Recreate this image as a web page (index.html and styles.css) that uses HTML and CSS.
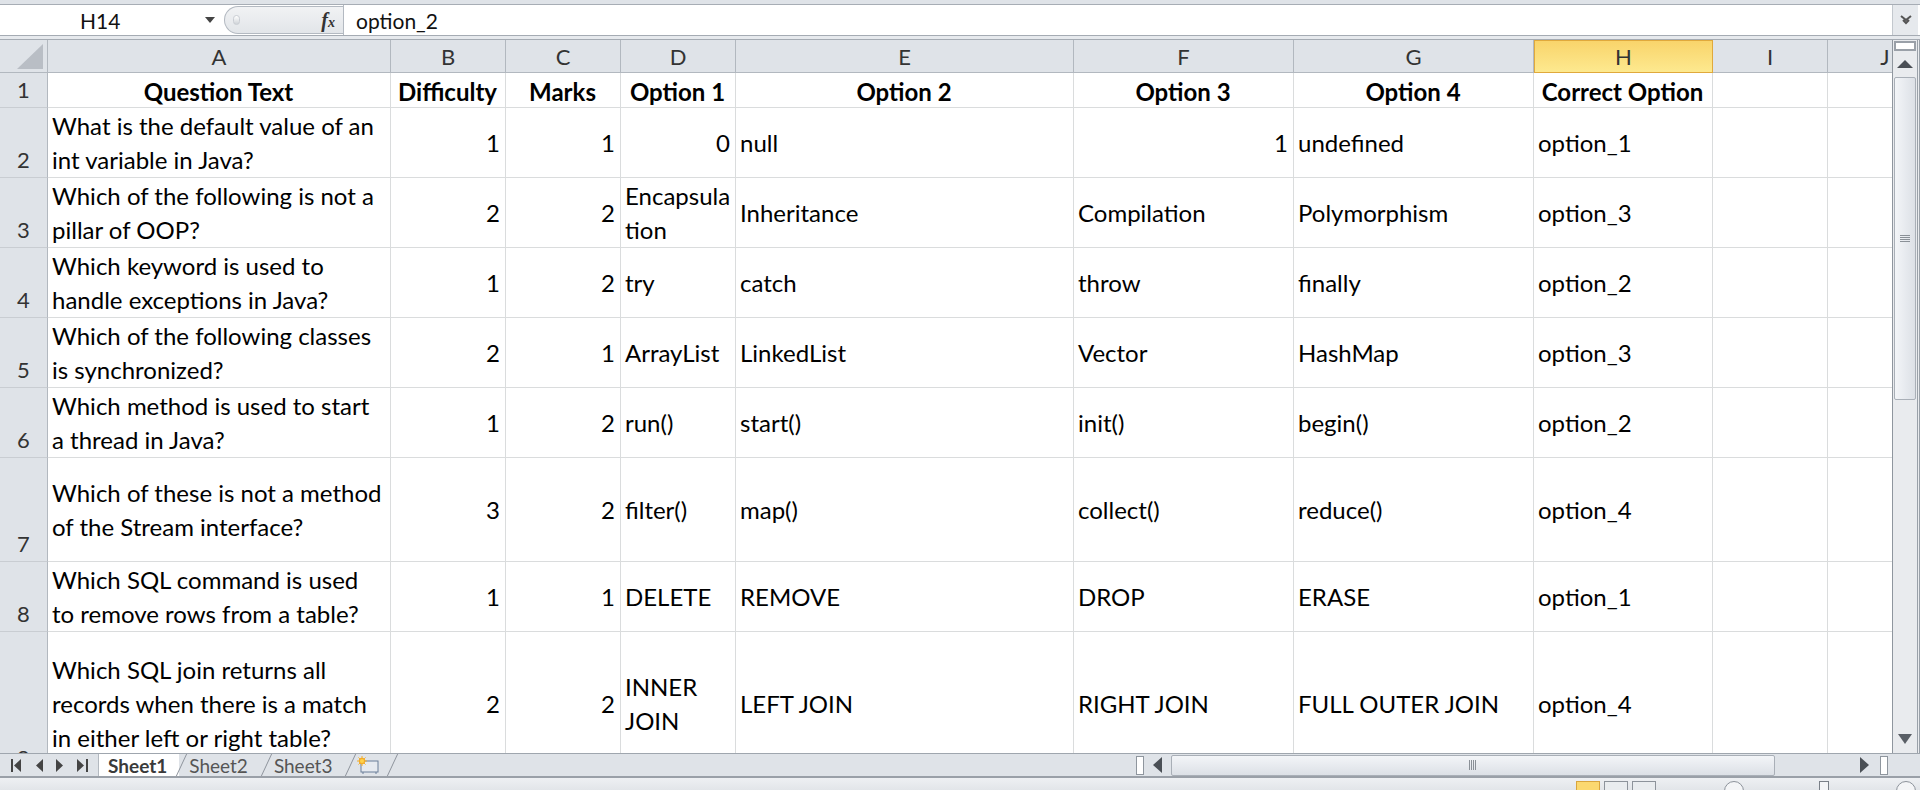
FILE: index.html
```html
<!DOCTYPE html>
<html>
<head>
<meta charset="utf-8">
<title>Questions - Excel</title>
<link rel="stylesheet" href="styles.css">
</head>
<body>
<div class="app">
  <div class="ribbon-edge"></div>
  <div class="formula-bar">
    <div class="namebox">
      <span class="name">H14</span>
      <svg class="nb-arrow" width="10" height="6" viewBox="0 0 10 6"><path d="M0 0H10L5 6Z" fill="#444"/></svg>
    </div>
    <div class="fb-pill">
      <span class="fb-dot"></span>
      <span class="fx">f<span class="fx-x">x</span></span>
    </div>
    <div class="fb-input">option_2</div>
    <div class="fb-expand">
      <svg width="12" height="10" viewBox="0 0 12 10"><path d="M1 1L6 5L11 1M3 5L6 8L9 5" fill="none" stroke="#555" stroke-width="2"/></svg>
    </div>
  </div>
  <div class="fb-sep"></div>

  <div class="sheet-area">
    <div class="grid-wrap">
      <div class="grid">
        <div class="corner"><svg width="26" height="25" viewBox="0 0 26 25"><path d="M26 0V25H0Z" fill="#b9bec5"/></svg></div>
        <div class="ch">A</div><div class="ch">B</div><div class="ch">C</div><div class="ch">D</div><div class="ch">E</div><div class="ch">F</div><div class="ch">G</div><div class="ch sel">H</div><div class="ch">I</div><div class="ch">J</div>

        <div class="rh">1</div>
        <div class="c b"><span>Question Text</span></div>
        <div class="c b"><span>Difficulty</span></div>
        <div class="c b"><span>Marks</span></div>
        <div class="c b"><span>Option 1</span></div>
        <div class="c b"><span>Option 2</span></div>
        <div class="c b"><span>Option 3</span></div>
        <div class="c b"><span>Option 4</span></div>
        <div class="c b"><span>Correct Option</span></div>
        <div class="c"></div><div class="c"></div>

        <div class="rh">2</div>
        <div class="c"><span>What is the default value of an<br>int variable in Java?</span></div>
        <div class="c r"><span>1</span></div>
        <div class="c r"><span>1</span></div>
        <div class="c r"><span>0</span></div>
        <div class="c"><span>null</span></div>
        <div class="c r"><span>1</span></div>
        <div class="c"><span>undefined</span></div>
        <div class="c"><span>option_1</span></div>
        <div class="c"></div><div class="c"></div>

        <div class="rh">3</div>
        <div class="c"><span>Which of the following is not a<br>pillar of OOP?</span></div>
        <div class="c r"><span>2</span></div>
        <div class="c r"><span>2</span></div>
        <div class="c"><span>Encapsula<br>tion</span></div>
        <div class="c"><span>Inheritance</span></div>
        <div class="c"><span>Compilation</span></div>
        <div class="c"><span>Polymorphism</span></div>
        <div class="c"><span>option_3</span></div>
        <div class="c"></div><div class="c"></div>

        <div class="rh">4</div>
        <div class="c"><span>Which keyword is used to<br>handle exceptions in Java?</span></div>
        <div class="c r"><span>1</span></div>
        <div class="c r"><span>2</span></div>
        <div class="c"><span>try</span></div>
        <div class="c"><span>catch</span></div>
        <div class="c"><span>throw</span></div>
        <div class="c"><span>finally</span></div>
        <div class="c"><span>option_2</span></div>
        <div class="c"></div><div class="c"></div>

        <div class="rh">5</div>
        <div class="c"><span>Which of the following classes<br>is synchronized?</span></div>
        <div class="c r"><span>2</span></div>
        <div class="c r"><span>1</span></div>
        <div class="c"><span>ArrayList</span></div>
        <div class="c"><span>LinkedList</span></div>
        <div class="c"><span>Vector</span></div>
        <div class="c"><span>HashMap</span></div>
        <div class="c"><span>option_3</span></div>
        <div class="c"></div><div class="c"></div>

        <div class="rh">6</div>
        <div class="c"><span>Which method is used to start<br>a thread in Java?</span></div>
        <div class="c r"><span>1</span></div>
        <div class="c r"><span>2</span></div>
        <div class="c"><span>run()</span></div>
        <div class="c"><span>start()</span></div>
        <div class="c"><span>init()</span></div>
        <div class="c"><span>begin()</span></div>
        <div class="c"><span>option_2</span></div>
        <div class="c"></div><div class="c"></div>

        <div class="rh">7</div>
        <div class="c"><span>Which of these is not a method<br>of the Stream interface?</span></div>
        <div class="c r"><span>3</span></div>
        <div class="c r"><span>2</span></div>
        <div class="c"><span>filter()</span></div>
        <div class="c"><span>map()</span></div>
        <div class="c"><span>collect()</span></div>
        <div class="c"><span>reduce()</span></div>
        <div class="c"><span>option_4</span></div>
        <div class="c"></div><div class="c"></div>

        <div class="rh">8</div>
        <div class="c"><span>Which SQL command is used<br>to remove rows from a table?</span></div>
        <div class="c r"><span>1</span></div>
        <div class="c r"><span>1</span></div>
        <div class="c"><span>DELETE</span></div>
        <div class="c"><span>REMOVE</span></div>
        <div class="c"><span>DROP</span></div>
        <div class="c"><span>ERASE</span></div>
        <div class="c"><span>option_1</span></div>
        <div class="c"></div><div class="c"></div>

        <div class="rh">9</div>
        <div class="c"><span>Which SQL join returns all<br>records when there is a match<br>in either left or right table?</span></div>
        <div class="c r"><span>2</span></div>
        <div class="c r"><span>2</span></div>
        <div class="c"><span>INNER<br>JOIN</span></div>
        <div class="c"><span>LEFT JOIN</span></div>
        <div class="c"><span>RIGHT JOIN</span></div>
        <div class="c"><span>FULL OUTER JOIN</span></div>
        <div class="c"><span>option_4</span></div>
        <div class="c"></div><div class="c"></div>
      </div>
    </div>
    <div class="vscroll">
      <div class="vs-split"></div>
      <div class="vs-arrow"><svg width="16" height="8" viewBox="0 0 16 8"><path d="M0 8L8 0L16 8Z" fill="#4a4f55"/></svg></div>
      <div class="vs-thumb"><svg width="10" height="8" viewBox="0 0 10 8"><path d="M0 0.5H10M0 2.5H10M0 4.5H10M0 6.5H10" stroke="#8a9097" stroke-width="1"/></svg></div>
      <div class="vs-track"></div>
      <div class="vs-arrow down"><svg width="14" height="10" viewBox="0 0 14 10"><path d="M0 0H14L7 10Z" fill="#5a5f66"/></svg></div>
    </div>
  </div>

  <div class="tabbar">
    <div class="navbtns">
      <svg width="11" height="13" viewBox="0 0 11 13"><path d="M1 0V13" stroke="#444" stroke-width="2"/><path d="M10 0V13L3 6.5Z" fill="#444"/></svg>
      <svg width="8" height="13" viewBox="0 0 8 13"><path d="M8 0V13L1 6.5Z" fill="#444"/></svg>
      <svg width="8" height="13" viewBox="0 0 8 13"><path d="M0 0V13L7 6.5Z" fill="#444"/></svg>
      <svg width="11" height="13" viewBox="0 0 11 13"><path d="M0 0V13L7 6.5Z" fill="#444"/><path d="M10 0V13" stroke="#444" stroke-width="2"/></svg>
    </div>
    <div class="tabs">
      <div class="tab active">Sheet1</div>
      <div class="tab">Sheet2</div>
      <div class="tab">Sheet3</div>
      <div class="tab icon">
        <svg width="24" height="18" viewBox="0 0 24 18"><rect x="5" y="5" width="17" height="11" fill="#e6eaf0" stroke="#6b7f99"/><path d="M7 16L7 18M20 16L20 18" stroke="#6b7f99"/><circle cx="6" cy="5" r="3.2" fill="#f5a623"/><path d="M6 0V10M1 5H11M2.5 1.5L9.5 8.5M9.5 1.5L2.5 8.5" stroke="#f0b030" stroke-width="1"/><circle cx="6" cy="5" r="2" fill="#ffd24a"/></svg>
      </div>
    </div>
    <div class="tab-fill"></div>
    <div class="hscroll">
      <div class="hs-split"></div>
      <div class="hs-arrow"><svg width="9" height="16" viewBox="0 0 9 16"><path d="M9 0V16L0 8Z" fill="#4a4f55"/></svg></div>
      <div class="hs-thumb"><svg width="8" height="10" viewBox="0 0 8 10"><path d="M0.5 0V10M2.5 0V10M4.5 0V10M6.5 0V10" stroke="#8a9097"/></svg></div>
      <div class="hs-track"></div>
      <div class="hs-arrow"><svg width="9" height="16" viewBox="0 0 9 16"><path d="M0 0V16L9 8Z" fill="#4a4f55"/></svg></div>
      <div class="hs-split end"></div>
    </div>
    <div class="tab-corner"></div>
  </div>

  <div class="statusbar">
    <div class="sb-fill"></div>
    <div class="sb-view active"></div>
    <div class="sb-view"></div>
    <div class="sb-view"></div>
    <div class="sb-zoom">
      <span class="sb-circle"></span>
      <span class="sb-line"><span class="sb-knob"></span></span>
      <span class="sb-circle"></span>
    </div>
  </div>
</div>
</body>
</html>
```

FILE: styles.css
```css
* { box-sizing: border-box; }
html, body { margin: 0; padding: 0; }
body {
  width: 1920px;
  height: 790px;
  overflow: hidden;
  background: #ffffff;
  font-family: Lato, "Liberation Sans", sans-serif;
  color: #000;
}
.app { width: 1920px; height: 790px; display: flex; flex-direction: column; overflow: hidden; }

/* ribbon edge */
.ribbon-edge {
  height: 5px;
  background: #dfe3e8;
  border-bottom: 1px solid #a7adb5;
}

/* formula bar */
.formula-bar {
  height: 31px;
  display: flex;
  background: #fff;
  border-bottom: 1px solid #a5abb3;
}
.namebox {
  width: 224px;
  display: flex;
  align-items: center;
}
.name {
  font-size: 21px;
  color: #111;
  margin-left: 80px;
  width: 123px;
}
.nb-arrow { margin-left: 2px; }
.fb-pill {
  width: 119px;
  margin: 1px 0 1px 0;
  border: 1px solid #b3b9c1;
  border-right: none;
  border-radius: 14px 0 0 14px;
  background: linear-gradient(#f1f2f4, #e2e5e9);
  display: flex;
  align-items: center;
  padding-left: 8px;
}
.fb-dot {
  width: 7px;
  height: 10px;
  border-radius: 4px;
  background: linear-gradient(#ffffff, #cfd3d8);
  border: 1px solid #c9cdd3;
}
.fx {
  margin-left: auto;
  margin-right: 8px;
  font-family: "Liberation Serif", serif;
  font-style: italic;
  font-weight: bold;
  font-size: 20px;
  color: #333;
}
.fx-x { font-size: 14px; }
.fb-input {
  flex: 1;
  border-left: 1px solid #b3b9c1;
  font-size: 21px;
  color: #111;
  padding-left: 12px;
  display: flex;
  align-items: center;
}
.fb-expand {
  width: 26px;
  margin: 0 2px 0 0;
  background: #e6e9ed;
  border-left: 1px solid #c3c8ce;
  display: flex;
  align-items: center;
  justify-content: center;
}
.fb-sep {
  height: 3px;
  background: #e6e9ed;
  border-bottom: 1px solid #a5abb3;
  box-sizing: content-box;
}

/* sheet area */
.sheet-area {
  height: 713px;
  display: flex;
}
.grid-wrap {
  width: 1892px;
  height: 713px;
  overflow: hidden;
}
.grid {
  display: grid;
  grid-template-columns: 48px 343px 115px 115px 115px 338px 220px 240px 179px 115px 115px;
  grid-template-rows: 33px 35px 70px 70px 70px 70px 70px 104px 70px 144px;
  width: 1943px;
}
.corner {
  background: #dfe3e8;
  border-right: 1px solid #b2b8bf;
  border-bottom: 1px solid #b2b8bf;
  display: flex;
  align-items: flex-end;
  justify-content: flex-end;
  padding: 0 4px 3px 0;
}
.ch {
  background: #dfe3e8;
  border-right: 1px solid #b2b8bf;
  border-bottom: 1px solid #b2b8bf;
  display: flex;
  align-items: center;
  justify-content: center;
  font-size: 22px;
  color: #333;
}
.ch.sel {
  background: linear-gradient(#f9d46b, #fde98f);
  border: 1px solid #e0a93c;
}
.rh {
  background: #dfe3e8;
  border-right: 1px solid #b2b8bf;
  border-bottom: 1px solid #c9cdd2;
  display: flex;
  align-items: flex-end;
  justify-content: center;
  font-size: 22px;
  line-height: 30px;
  color: #333;
  padding-bottom: 2px;
}
.c {
  border-right: 1px solid #dadcdd;
  border-bottom: 1px solid #dadcdd;
  display: flex;
  align-items: center;
  justify-content: flex-start;
  padding: 0 5px 0 4px;
  font-size: 24px;
  line-height: 34px;
  white-space: nowrap;
  color: #000;
}
.c.r { justify-content: flex-end; }
.c.b { justify-content: center; font-weight: bold; padding-top: 3px; }

/* vertical scrollbar */
.vscroll {
  width: 28px;
  height: 713px;
  background: #e9ebee;
  border-left: 1px solid #8f969e;
  border-right: 3px double #9aa1a9;
  display: flex;
  flex-direction: column;
}
.vs-split {
  height: 10px;
  margin: 1px 1px 0 1px;
  background: #fff;
  border: 2px solid #9aa0a8;
}
.vs-arrow {
  height: 26px;
  display: flex;
  align-items: center;
  justify-content: center;
}
.vs-arrow.down { height: 28px; }
.vs-thumb {
  height: 323px;
  margin: 0 1px;
  border: 1px solid #a9afb7;
  border-radius: 2px;
  background: linear-gradient(to right, #f3f5f8, #dce0e6);
  display: flex;
  align-items: center;
  justify-content: center;
}
.vs-track { flex: 1; }

/* sheet tabs */
.tabbar {
  height: 25px;
  display: flex;
  background: #dfe3e8;
  border-top: 1px solid #9fa6ae;
  border-bottom: 2px solid #9aa0a8;
}
.navbtns {
  width: 99px;
  display: flex;
  align-items: center;
  justify-content: space-around;
  padding: 0 4px;
  border-right: 1px solid #b3b9c0;
}
.tabs { display: flex; height: 100%; }
.tab {
  position: relative;
  height: 100%;
  padding: 0 16px 0 10px;
  display: flex;
  align-items: center;
  font-size: 19px;
  color: #555;
}
.tab::after {
  content: "";
  position: absolute;
  right: -3px;
  top: 0;
  bottom: 0;
  width: 1px;
  background: #8e949c;
  transform: skewX(-25deg);
}
.tab.active {
  background: #fff;
  font-weight: bold;
  color: #3a3a3a;
  padding-left: 9px;
  padding-right: 12px;
}
.tab.icon { padding: 0 10px 0 8px; }
.tab-fill { flex: 1; }
.hscroll {
  width: 762px;
  display: flex;
  align-items: center;
  padding-left: 6px;
}
.hs-split {
  width: 8px;
  height: 19px;
  background: #fff;
  border: 1px solid #8f969e;
}
.hs-split.end { margin-left: 2px; margin-right: 4px; }
.hs-arrow {
  width: 27px;
  display: flex;
  align-items: center;
  justify-content: center;
}
.hs-thumb {
  width: 604px;
  height: 21px;
  border: 1px solid #a9afb7;
  border-radius: 2px;
  background: linear-gradient(#f3f5f8, #dce0e6);
  display: flex;
  align-items: center;
  justify-content: center;
}
.hs-track { flex: 1; }
.tab-corner { width: 28px; }

/* status bar */
.statusbar {
  height: 12px;
  background: linear-gradient(#eef0f3, #e2e5e9);
  display: flex;
  align-items: flex-start;
  padding-top: 3px;
}
.sb-fill { width: 1576px; }
.sb-view {
  width: 24px;
  height: 12px;
  margin-right: 4px;
  border: 1px solid #8d939b;
  background: #e9ecef;
}
.sb-view.active { background: #fbd870; border-color: #d9a53e; }
.sb-zoom {
  display: flex;
  align-items: flex-start;
  margin-left: 64px;
}
.sb-circle {
  width: 20px;
  height: 20px;
  border-radius: 50%;
  border: 1px solid #8d939b;
  background: #f4f5f7;
}
.sb-line {
  width: 152px;
  position: relative;
}
.sb-knob {
  position: absolute;
  left: 75px;
  top: 0;
  width: 10px;
  height: 12px;
  background: #f4f5f7;
  border: 1px solid #7a8088;
}
```
